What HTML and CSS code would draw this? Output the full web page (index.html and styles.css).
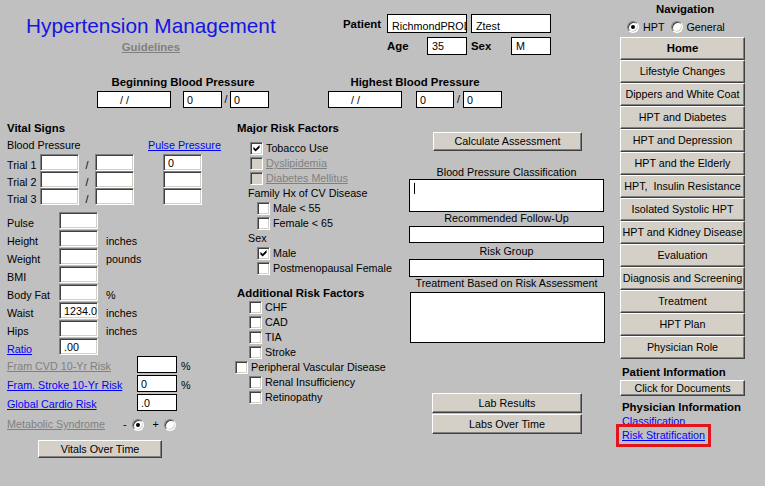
FILE: index.html
```html
<!DOCTYPE html>
<html>
<head>
<meta charset="utf-8">
<title>Hypertension Management</title>
<link rel="stylesheet" href="styles.css">
</head>
<body>
<div class="app">
  <div class="main">
    <div class="header">
      <div class="title-block">
        <div class="title-inner">
          <div class="title">Hypertension Management</div>
          <div class="guidelines">Guidelines</div>
        </div>
      </div>
      <div class="patient">
        <div class="prow">
          <span class="plabel">Patient</span>
          <span class="tbox pbox">RichmondPROD</span>
          <span class="tbox pbox">Ztest</span>
        </div>
        <div class="prow2">
          <span class="alabel">Age</span><span class="tbox sbox">35</span>
          <span class="alabel">Sex</span><span class="tbox sbox">M</span>
        </div>
      </div>
    </div>

    <div class="bp-row">
      <div class="bp-group bp-begin">
        <div class="bp-label">Beginning Blood Pressure</div>
        <div class="bp-boxes">
          <span class="tbox datebox">/ /</span>
          <span class="tbox numbox gap12">0</span>
          <span class="bp-slash s8">/</span>
          <span class="tbox numbox">0</span>
        </div>
      </div>
      <div class="bp-group bp-high">
        <div class="bp-label">Highest Blood Pressure</div>
        <div class="bp-boxes">
          <span class="tbox datebox">/ /</span>
          <span class="tbox numbox gap14 w38">0</span>
          <span class="bp-slash s9">/</span>
          <span class="tbox numbox">0</span>
        </div>
      </div>
    </div>

    <div class="columns">
      <div class="col-vitals">
        <div class="head">Vital Signs</div>
        <div class="bp-head"><span class="bp-head-label">Blood Pressure</span><span class="link">Pulse Pressure</span></div>
        <div class="trials">
          <div class="trow"><span class="tlabel">Trial 1</span><span class="ibox"></span><span class="tslash">/</span><span class="ibox"></span><span class="ibox pp-box">0</span></div>
          <div class="trow"><span class="tlabel">Trial 2</span><span class="ibox"></span><span class="tslash">/</span><span class="ibox"></span><span class="ibox pp-box"></span></div>
          <div class="trow"><span class="tlabel">Trial 3</span><span class="ibox"></span><span class="tslash">/</span><span class="ibox"></span><span class="ibox pp-box"></span></div>
        </div>
        <div class="vitals">
          <div class="vrow"><span class="vlabel">Pulse</span><span class="ibox"></span></div>
          <div class="vrow"><span class="vlabel">Height</span><span class="ibox"></span><span class="unit">inches</span></div>
          <div class="vrow"><span class="vlabel">Weight</span><span class="ibox"></span><span class="unit">pounds</span></div>
          <div class="vrow"><span class="vlabel">BMI</span><span class="ibox"></span></div>
          <div class="vrow"><span class="vlabel">Body Fat</span><span class="ibox"></span><span class="unit">%</span></div>
          <div class="vrow"><span class="vlabel">Waist</span><span class="ibox">1234.0</span><span class="unit">inches</span></div>
          <div class="vrow"><span class="vlabel">Hips</span><span class="ibox"></span><span class="unit">inches</span></div>
          <div class="vrow"><span class="vlabel"><span class="link">Ratio</span></span><span class="ibox">.00</span></div>
        </div>
        <div class="fram">
          <div class="frow"><span class="flabel"><span class="dis">Fram CVD 10-Yr Risk</span></span><span class="tbox fbox"></span><span class="fpct">%</span></div>
          <div class="frow"><span class="flabel"><span class="link">Fram. Stroke 10-Yr Risk</span></span><span class="tbox fbox">0</span><span class="fpct">%</span></div>
          <div class="frow"><span class="flabel"><span class="link">Global Cardio Risk</span></span><span class="tbox fbox">.0</span></div>
        </div>
        <div class="mrow">
          <span class="mlabel"><span class="dis">Metabolic Syndrome</span></span>
          <span class="msign">-</span><span class="radio checked m-r1"></span>
          <span class="msign plus">+</span><span class="radio m-r2"></span>
        </div>
        <div class="btn vot">Vitals Over Time</div>
      </div>

      <div class="col-risk">
        <div class="rhead">Major Risk Factors</div>
        <div class="cb-row ind1 first"><span class="cb"><svg width="7" height="7" viewBox="0 0 7 8"><polygon points="0,2 2.5,4.5 7,0 7,3 2.5,7.5 0,5" fill="#000"/></svg></span><span>Tobacco Use</span></div>
        <div class="cb-row ind1"><span class="cb disabled"></span><span class="dis">Dyslipidemia</span></div>
        <div class="cb-row ind1"><span class="cb disabled"></span><span class="dis">Diabetes Mellitus</span></div>
        <div class="cb-row ind-label">Family Hx of CV Disease</div>
        <div class="cb-row ind2"><span class="cb"></span><span>Male &lt; 55</span></div>
        <div class="cb-row ind2"><span class="cb"></span><span>Female &lt; 65</span></div>
        <div class="cb-row ind-label">Sex</div>
        <div class="cb-row ind2"><span class="cb"><svg width="7" height="7" viewBox="0 0 7 8"><polygon points="0,2 2.5,4.5 7,0 7,3 2.5,7.5 0,5" fill="#000"/></svg></span><span>Male</span></div>
        <div class="cb-row ind2"><span class="cb"></span><span>Postmenopausal Female</span></div>
        <div class="rhead add">Additional Risk Factors</div>
        <div class="cb-row ind3"><span class="cb"></span><span>CHF</span></div>
        <div class="cb-row ind3"><span class="cb"></span><span>CAD</span></div>
        <div class="cb-row ind3"><span class="cb"></span><span>TIA</span></div>
        <div class="cb-row ind3"><span class="cb"></span><span>Stroke</span></div>
        <div class="cb-row"><span class="cb"></span><span>Peripheral Vascular Disease</span></div>
        <div class="cb-row ind3"><span class="cb"></span><span>Renal Insufficiency</span></div>
        <div class="cb-row ind3"><span class="cb"></span><span>Retinopathy</span></div>
      </div>

      <div class="col-assess">
        <div class="btn calc">Calculate Assessment</div>
        <div class="alabel2 l1">Blood Pressure Classification</div>
        <div class="abox b1"><span class="cursor"></span></div>
        <div class="alabel2">Recommended Follow-Up</div>
        <div class="abox b2"></div>
        <div class="alabel2 l3">Risk Group</div>
        <div class="abox b3"></div>
        <div class="alabel2">Treatment Based on Risk Assessment</div>
        <div class="abox b4"></div>
        <div class="btn lab lab1">Lab Results</div>
        <div class="btn lab lab2">Labs Over Time</div>
      </div>
    </div>
  </div>

  <div class="nav">
    <div class="nav-head">Navigation</div>
    <div class="nav-radios">
      <span class="radio checked nr1"></span><span class="nr-label">HPT</span>
      <span class="radio nr2"></span><span class="nr-label">General</span>
    </div>
    <div class="nav-list">
      <div class="btn nbtn home">Home</div>
      <div class="btn nbtn">Lifestyle Changes</div>
      <div class="btn nbtn">Dippers and White Coat</div>
      <div class="btn nbtn">HPT and Diabetes</div>
      <div class="btn nbtn">HPT and Depression</div>
      <div class="btn nbtn">HPT and the Elderly</div>
      <div class="btn nbtn">HPT,&nbsp; Insulin Resistance</div>
      <div class="btn nbtn">Isolated Systolic HPT</div>
      <div class="btn nbtn">HPT and Kidney Disease</div>
      <div class="btn nbtn">Evaluation</div>
      <div class="btn nbtn">Diagnosis and Screening</div>
      <div class="btn nbtn">Treatment</div>
      <div class="btn nbtn">HPT Plan</div>
      <div class="btn nbtn">Physician Role</div>
    </div>
    <div class="info-head pi">Patient Information</div>
    <div class="btn docs">Click for Documents</div>
    <div class="info-head phi">Physician Information</div>
    <div class="nlink"><span class="link">Classification</span></div>
    <div class="nlink"><span class="link">Risk Stratification</span></div>
    <div class="redbox"></div>
  </div>
</div>
</body>
</html>
```

FILE: styles.css
```css
* { box-sizing: border-box; margin: 0; padding: 0; }
html, body { width: 765px; height: 486px; overflow: hidden; }
body {
  background: #c0c0c0;
  font-family: "Liberation Sans", Arial, sans-serif;
  font-size: 10.75px;
  color: #000;
}
.app { display: flex; height: 486px; }
.main { width: 610px; flex: none; }
.nav { width: 155px; flex: none; position: relative; padding: 3px 0 0 10px; }

/* generic */
.link { color: #0000ff; text-decoration: underline; }
.dis { color: #808080; text-decoration: underline; }
.tbox {
  display: block; flex: none; background: #fff; border: 1px solid #000;
  overflow: hidden; white-space: nowrap;
}
.ibox {
  display: block; flex: none; width: 39px; height: 17px; background: #fff;
  border: 1px solid; border-color: #808080 #fff #fff #808080;
  box-shadow: inset 1px 1px #404040, inset -1px -1px #d4d0c8;
  line-height: 14px; padding: 1px 0 0 4px; overflow: hidden; white-space: nowrap;
}
.btn {
  display: block; background: #d4d0c8;
  border: 1px solid; border-color: #fff #404040 #404040 #fff;
  box-shadow: inset -1px -1px #808080;
  text-align: center; white-space: nowrap; overflow: hidden;
}
.radio {
  display: block; flex: none; width: 12px; height: 12px; border-radius: 50%;
  background: #fff; border: 1px solid; border-color: #808080 #fff #fff #808080;
  box-shadow: inset 1px 1px #404040, inset -1px -1px #d4d0c8;
  position: relative;
}
.radio.checked::after {
  content: ""; position: absolute; left: 3px; top: 3px; width: 4px; height: 4px;
  border-radius: 50%; background: #000;
}
.cb {
  display: flex; align-items: center; justify-content: center; flex: none;
  width: 13px; height: 13px; background: #fff;
  border: 1px solid; border-color: #808080 #fff #fff #808080;
  box-shadow: inset 1px 1px #404040, inset -1px -1px #d4d0c8;
  margin-right: 3px;
}
.cb.disabled { background: #d4d0c8; }
.cb svg { display: block; }

/* header */
.header { display: flex; padding-top: 14px; height: 55px; }
.title-block { width: 343px; flex: none; padding-left: 26px; }
.title-inner { display: inline-flex; flex-direction: column; align-items: center; }
.title { font-size: 20.8px; line-height: 24px; color: #1515e0; white-space: nowrap; }
.guidelines { margin-top: 3px; line-height: 13px; font-size: 11.4px; font-weight: bold; color: #808080; text-decoration: underline; }

.prow { display: flex; height: 19px; align-items: flex-start; }
.plabel { width: 44px; font-size: 11.4px; font-weight: bold; line-height: 21px; }
.pbox { width: 80px; height: 19px; line-height: 22px; padding-left: 4px; margin-right: 4px; }
.prow2 { display: flex; height: 18px; margin-top: 4px; margin-left: 44px; align-items: flex-start; }
.alabel { width: 40px; font-size: 11.4px; font-weight: bold; line-height: 18px; }
.sbox { width: 40px; height: 18px; line-height: 16px; padding-left: 4px; margin-right: 4px; }

.bp-row { display: flex; margin-top: 21px; }
.bp-begin { margin-left: 97px; }
.bp-high { margin-left: 59px; }
.bp-label { font-size: 11.4px; font-weight: bold; line-height: 13px; text-align: center; white-space: nowrap; }
.bp-boxes { display: flex; margin-top: 2px; }
.datebox { width: 74px; height: 17px; line-height: 16px; padding-left: 22px; }
.numbox { width: 39px; height: 17px; line-height: 16px; padding-left: 3px; }
.numbox.w38 { width: 38px; }
.gap12 { margin-left: 12px; }
.gap14 { margin-left: 14px; }
.bp-slash { line-height: 17px; text-align: center; }
.s8 { width: 8px; }
.s9 { width: 9px; }

/* columns */
.columns { display: flex; margin-top: 13px; }
.col-vitals { width: 235px; flex: none; padding-left: 7px; }
.col-risk { width: 174px; flex: none; }
.col-assess { width: 201px; flex: none; }

.head { font-size: 11.4px; font-weight: bold; line-height: 15px; }
.bp-head { display: flex; line-height: 15px; margin-top: 2px; }
.bp-head-label { width: 141px; }
.trials { margin-top: 1px; }
.trow { display: flex; height: 17px; align-items: flex-start; }
.tlabel { width: 33px; line-height: 23px; }
.tslash { width: 16px; text-align: center; line-height: 23px; }
.pp-box { margin-left: 29px; }

.vitals { margin-top: 7px; }
.vrow { display: flex; height: 17px; margin-bottom: 1px; align-items: flex-start; }
.vlabel { width: 52px; line-height: 23px; }
.unit { margin-left: 8px; line-height: 23px; }

.fram { margin-top: 1px; }
.frow { display: flex; height: 17px; margin-bottom: 2px; align-items: flex-start; }
.flabel { width: 130px; line-height: 21px; white-space: nowrap; }
.fbox { width: 40px; height: 17px; line-height: 16px; padding-left: 3px; }
.fpct { margin-left: 4px; line-height: 21px; }

.mrow { display: flex; align-items: center; height: 15px; margin-top: 6px; line-height: 15px; }
.mlabel { width: 116px; white-space: nowrap; }
.m-r1 { margin-left: 5px; }
.plus { margin-left: 9px; }
.m-r2 { margin-left: 5px; }

.vot { width: 124px; height: 18px; line-height: 16px; margin: 8px 0 0 31px; }

/* risk factors */
.rhead { font-size: 11.4px; font-weight: bold; line-height: 15px; padding-left: 2px; white-space: nowrap; }
.rhead.add { margin-top: 10px; line-height: 14px; }
.cb-row { display: flex; align-items: center; height: 15px; line-height: 15px; white-space: nowrap; }
.cb-row.first { margin-top: 5px; }
.ind1 { padding-left: 15px; }
.ind-label { padding-left: 13px; }
.ind2 { padding-left: 22px; }
.ind3 { padding-left: 14px; }

/* assessment */
.calc { width: 149px; height: 19px; line-height: 17px; margin: 11px 0 0 24px; }
.alabel2 { width: 195px; text-align: center; line-height: 13px; white-space: nowrap; }
.alabel2.l1 { margin-top: 15px; }
.alabel2.l3 { margin-top: 2px; }
.abox { width: 195px; background: #fff; border: 1px solid #000; }
.b1 { height: 33px; padding: 3px 0 0 4px; }
.b2 { height: 17px; margin-top: 1px; }
.b3 { height: 18px; margin-top: 1px; }
.b4 { height: 51px; margin: 2px 0 0 1px; }
.cursor { display: block; width: 1px; height: 11px; background: #000; }
.lab { width: 150px; height: 20px; line-height: 18px; margin-left: 23px; }
.lab1 { margin-top: 50px; }
.lab2 { margin-top: 1px; }

/* navigation */
.nav-head { font-size: 11.4px; font-weight: bold; line-height: 13px; padding-left: 36px; }
.nav-radios { display: flex; align-items: center; height: 12px; margin-top: 5px; line-height: 13px; }
.nr1 { margin-left: 7px; }
.nr2 { margin-left: 6px; }
.nr-label { margin-left: 4px; }
.nav-list { margin-top: 4px; }
.nbtn { width: 125px; height: 23px; line-height: 21px; }
.home { font-size: 11.4px; font-weight: bold; }
.info-head { font-size: 11.4px; font-weight: bold; line-height: 13px; padding-left: 2px; white-space: nowrap; }
.pi { margin-top: 7px; }
.docs { width: 125px; height: 16px; line-height: 14px; margin-top: 1px; }
.phi { margin-top: 5px; }
.nlink { line-height: 14px; padding-left: 2px; }
.redbox {
  position: absolute; left: 6px; top: 424px; width: 95px; height: 23px;
  border: 3px solid #e3141b;
}
```
